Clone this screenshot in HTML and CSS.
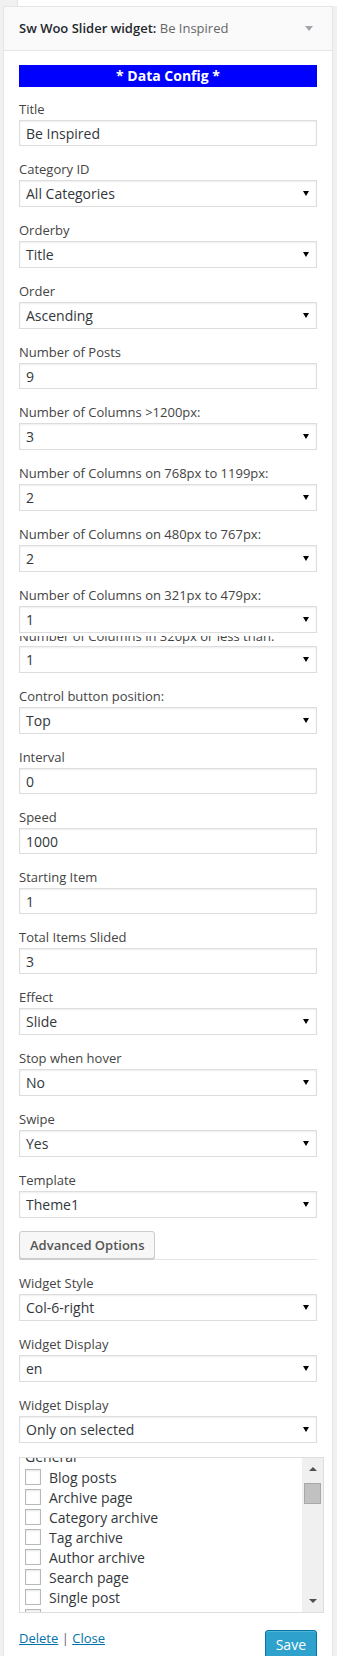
FILE: index.html
```html
<!DOCTYPE html>
<html lang="en">
<head>
<meta charset="utf-8">
<title>Sw Woo Slider widget</title>
<link rel="stylesheet" href="styles.css">
</head>
<body>
<div class="topstrip"></div>
<div class="widget">
  <div class="widget-top">
    <h3 class="widget-title">Sw Woo Slider widget:<span class="in-title"> Be Inspired</span></h3>
    <span class="toggle-arrow"></span>
  </div>
  <div class="widget-inside">
    <div class="data-config">* Data Config *</div>

    <div class="field"><label>Title</label><input class="ctl" type="text" value="Be Inspired"></div>
    <div class="field"><label>Category ID</label><div class="sel"><select class="ctl"><option>All Categories</option></select></div></div>
    <div class="field"><label>Orderby</label><div class="sel"><select class="ctl"><option>Title</option></select></div></div>
    <div class="field"><label>Order</label><div class="sel"><select class="ctl"><option>Ascending</option></select></div></div>
    <div class="field"><label>Number of Posts</label><input class="ctl" type="text" value="9"></div>
    <div class="field"><label>Number of Columns &gt;1200px:</label><div class="sel"><select class="ctl"><option>3</option></select></div></div>
    <div class="field"><label>Number of Columns on 768px to 1199px:</label><div class="sel"><select class="ctl"><option>2</option></select></div></div>
    <div class="field"><label>Number of Columns on 480px to 767px:</label><div class="sel"><select class="ctl"><option>2</option></select></div></div>
    <div class="field no-gap"><label>Number of Columns on 321px to 479px:</label><div class="sel"><select class="ctl"><option>1</option></select></div></div>
    <div class="field"><div class="clip"><label>Number of Columns in 320px or less than:</label></div><div class="sel"><select class="ctl"><option>1</option></select></div></div>
    <div class="field"><label>Control button position:</label><div class="sel"><select class="ctl"><option>Top</option></select></div></div>
    <div class="field"><label>Interval</label><input class="ctl" type="text" value="0"></div>
    <div class="field"><label>Speed</label><input class="ctl" type="text" value="1000"></div>
    <div class="field"><label>Starting Item</label><input class="ctl" type="text" value="1"></div>
    <div class="field"><label>Total Items Slided</label><input class="ctl" type="text" value="3"></div>
    <div class="field"><label>Effect</label><div class="sel"><select class="ctl"><option>Slide</option></select></div></div>
    <div class="field"><label>Stop when hover</label><div class="sel"><select class="ctl"><option>No</option></select></div></div>
    <div class="field"><label>Swipe</label><div class="sel"><select class="ctl"><option>Yes</option></select></div></div>
    <div class="field"><label>Template</label><div class="sel"><select class="ctl"><option>Theme1</option></select></div></div>

    <div class="adv"><button class="btn" type="button">Advanced Options</button></div>

    <div class="field"><label>Widget Style</label><div class="sel"><select class="ctl"><option>Col-6-right</option></select></div></div>
    <div class="field"><label>Widget Display</label><div class="sel"><select class="ctl"><option>en</option></select></div></div>
    <div class="field last"><label>Widget Display</label><div class="sel"><select class="ctl"><option>Only on selected</option></select></div></div>

    <div class="checklist">
      <div class="list-view">
        <div class="items">
          <div class="group">General</div>
          <label class="item"><input type="checkbox" class="cb">Blog posts</label>
          <label class="item"><input type="checkbox" class="cb">Archive page</label>
          <label class="item"><input type="checkbox" class="cb">Category archive</label>
          <label class="item"><input type="checkbox" class="cb">Tag archive</label>
          <label class="item"><input type="checkbox" class="cb">Author archive</label>
          <label class="item"><input type="checkbox" class="cb">Search page</label>
          <label class="item"><input type="checkbox" class="cb">Single post</label>
          <label class="item"><input type="checkbox" class="cb">Attachment</label>
        </div>
      </div>
      <div class="scrollbar">
        <div class="sb-btn"><span class="sb-up"></span></div>
        <div class="sb-thumb"></div>
        <div class="sb-track"></div>
        <div class="sb-btn"><span class="sb-down"></span></div>
      </div>
    </div>

    <div class="actions">
      <div class="links"><a href="#">Delete</a> <span class="sep">|</span> <a href="#">Close</a></div>
      <button class="btn-primary" type="button">Save</button>
    </div>
  </div>
</div>
</body>
</html>
```

FILE: styles.css
```css
html, body {
  margin: 0;
  padding: 0;
}
body {
  background: #f1f1f1;
  font-family: "Open Sans", "Liberation Sans", sans-serif;
  font-size: 13px;
  color: #444;
  line-height: 1.5;
}
.topstrip {
  height: 6px;
  margin-left: 17px;
  background: #fff;
  border-left: 1px solid #e5e5e5;
}
.widget {
  margin: 0 4px 0 3px;
  background: #fff;
  border: 1px solid #e5e5e5;
  border-bottom: 0;
  box-shadow: 0 1px 1px rgba(0,0,0,.04);
}
.widget-top {
  height: 43px;
  background: #fafafa;
  border-bottom: 1px solid #e5e5e5;
  display: flex;
  align-items: center;
  justify-content: space-between;
  padding: 0 19px 0 15px;
}
.widget-title {
  margin: 0;
  font-size: 13px;
  font-weight: 600;
  color: #23282d;
  white-space: nowrap;
}
.in-title {
  font-weight: 400;
  color: #666;
}
.toggle-arrow {
  width: 0;
  height: 0;
  border-left: 4px solid transparent;
  border-right: 4px solid transparent;
  border-top: 5px solid #a0a5aa;
}
.widget-inside {
  padding: 14px 15px 40px;
}
.data-config {
  height: 22px;
  line-height: 22px;
  background: #0000ff;
  color: #fff;
  font-weight: 700;
  font-size: 14px;
  text-align: center;
  margin-bottom: 12px;
}
.field {
  margin-bottom: 13px;
}
.field.no-gap {
  margin-bottom: 0;
}
.field.last {
  margin-bottom: 0;
}
.field label {
  display: block;
  line-height: 20px;
  margin-bottom: 1px;
}
.ctl {
  display: block;
  width: 100%;
  box-sizing: border-box;
  margin: 0;
  border: 1px solid #ddd;
  box-shadow: inset 0 1px 2px rgba(0,0,0,.07);
  background: #fff;
  color: #32373c;
  font-family: "Open Sans", "Liberation Sans", sans-serif;
  font-size: 14px;
  padding: 0 6px;
  border-radius: 0;
  outline: none;
}
input.ctl {
  height: 26px;
}
.sel {
  position: relative;
}
select.ctl {
  height: 27px;
  -webkit-appearance: none;
  appearance: none;
  padding-right: 20px;
}
.sel::after {
  content: "";
  position: absolute;
  right: 8px;
  top: 11px;
  border-left: 3px solid transparent;
  border-right: 3px solid transparent;
  border-top: 5px solid #000;
  pointer-events: none;
}
.clip {
  height: 9px;
  margin: 3px 0 1px;
  overflow: hidden;
}
.field .clip label {
  margin: -10px 0 0;
}
.adv {
  border-bottom: 1px solid #e5e5e5;
  margin-bottom: 13px;
}
.btn {
  display: block;
  height: 28px;
  margin: 0;
  padding: 0 10px;
  background: #f7f7f7;
  border: 1px solid #ccc;
  border-radius: 3px;
  box-shadow: 0 1px 0 #ccc;
  color: #555;
  font-family: "Open Sans", "Liberation Sans", sans-serif;
  font-size: 13px;
  font-weight: 600;
}
.checklist {
  display: flex;
  height: 156px;
  box-sizing: border-box;
  margin: 14px -7px 0 0;
  border: 1px solid #ddd;
  background: #fff;
}
.list-view {
  flex: 1;
  overflow: hidden;
  padding: 0 5px;
}
.items {
  margin-top: -11px;
}
.group {
  line-height: 20px;
  color: #32373c;
  font-size: 14px;
}
.item {
  display: flex;
  align-items: center;
  height: 20px;
  font-size: 14px;
  color: #32373c;
}
.cb {
  -webkit-appearance: none;
  appearance: none;
  width: 16px;
  height: 16px;
  margin: 0 8px 0 0;
  border: 1px solid #b4b9be;
  background: #fff;
  box-shadow: inset 0 1px 2px rgba(0,0,0,.1);
  flex: none;
}
.scrollbar {
  width: 21px;
  flex: none;
  background: #f0f0f0;
  display: flex;
  flex-direction: column;
  align-items: center;
}
.sb-btn {
  height: 22px;
  width: 100%;
  display: flex;
  align-items: center;
  justify-content: center;
  flex: none;
}
.sb-up {
  border-left: 4px solid transparent;
  border-right: 4px solid transparent;
  border-bottom: 4px solid #505050;
}
.sb-down {
  border-left: 4px solid transparent;
  border-right: 4px solid transparent;
  border-top: 4px solid #505050;
}
.sb-thumb {
  width: 17px;
  height: 21px;
  box-sizing: border-box;
  margin-top: 3px;
  background: #c1c1c1;
  border: 1px solid #a8a8a8;
  flex: none;
}
.sb-track {
  flex: 1;
}
.actions {
  display: flex;
  justify-content: space-between;
  align-items: flex-start;
  margin-top: 15px;
}
.links {
  line-height: 20px;
}
.links a {
  color: #0073aa;
  text-decoration: underline;
}
.sep {
  color: #666;
}
.btn-primary {
  margin-top: 2px;
  height: 28px;
  padding: 0 10px;
  background: #2ea2cc;
  border: 1px solid #0074a2;
  border-radius: 3px;
  box-shadow: inset 0 1px 0 rgba(120,200,230,.5), 0 1px 0 rgba(0,0,0,.15);
  color: #fff;
  font-family: "Open Sans", "Liberation Sans", sans-serif;
  font-size: 14px;
}
```
